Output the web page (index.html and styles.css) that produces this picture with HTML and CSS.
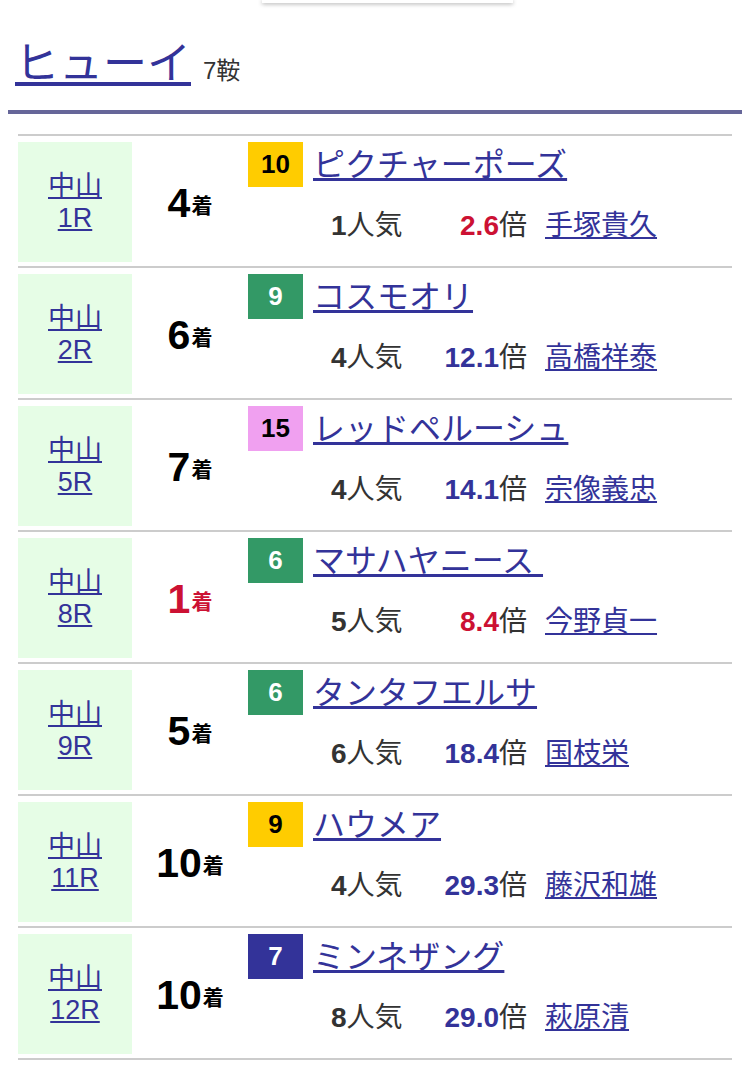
FILE: index.html
```html
<!DOCTYPE html>
<html lang="ja">
<head>
    <meta charset="UTF-8">
    <meta name="viewport" content="width=device-width, initial-scale=1.0">
    <title>ヒューイ - 騎乗成績</title>
    <link rel="stylesheet" href="styles.css">
</head>
<body>
    <div class="menu-edge"></div>

    <div class="header">
        <a href="#" class="horse-title">ヒューイ</a>
        <span class="count">7鞍</span>
    </div>

    <div class="list">
        <div class="row">
            <div class="race"><a href="#">中山<br>1R</a></div>
            <div class="rank">4<small>着</small></div>
            <div class="detail">
                <div class="name-line">
                    <span class="waku waku-yellow">10</span>
                    <a href="#" class="horse">ピクチャーポーズ</a>
                </div>
                <div class="info-line">
                    <span class="pop"><b>1</b>人気</span>
                    <span class="odds"><b class="hot">2.6</b>倍</span>
                    <a href="#" class="jockey">手塚貴久</a>
                </div>
            </div>
        </div>

        <div class="row">
            <div class="race"><a href="#">中山<br>2R</a></div>
            <div class="rank">6<small>着</small></div>
            <div class="detail">
                <div class="name-line">
                    <span class="waku waku-green">9</span>
                    <a href="#" class="horse">コスモオリ</a>
                </div>
                <div class="info-line">
                    <span class="pop"><b>4</b>人気</span>
                    <span class="odds"><b>12.1</b>倍</span>
                    <a href="#" class="jockey">高橋祥泰</a>
                </div>
            </div>
        </div>

        <div class="row">
            <div class="race"><a href="#">中山<br>5R</a></div>
            <div class="rank">7<small>着</small></div>
            <div class="detail">
                <div class="name-line">
                    <span class="waku waku-pink">15</span>
                    <a href="#" class="horse">レッドペルーシュ</a>
                </div>
                <div class="info-line">
                    <span class="pop"><b>4</b>人気</span>
                    <span class="odds"><b>14.1</b>倍</span>
                    <a href="#" class="jockey">宗像義忠</a>
                </div>
            </div>
        </div>

        <div class="row">
            <div class="race"><a href="#">中山<br>8R</a></div>
            <div class="rank win">1<small>着</small></div>
            <div class="detail">
                <div class="name-line">
                    <span class="waku waku-green">6</span>
                    <a href="#" class="horse">マサハヤニース&nbsp;</a>
                </div>
                <div class="info-line">
                    <span class="pop"><b>5</b>人気</span>
                    <span class="odds"><b class="hot">8.4</b>倍</span>
                    <a href="#" class="jockey">今野貞一</a>
                </div>
            </div>
        </div>

        <div class="row">
            <div class="race"><a href="#">中山<br>9R</a></div>
            <div class="rank">5<small>着</small></div>
            <div class="detail">
                <div class="name-line">
                    <span class="waku waku-green">6</span>
                    <a href="#" class="horse">タンタフエルサ</a>
                </div>
                <div class="info-line">
                    <span class="pop"><b>6</b>人気</span>
                    <span class="odds"><b>18.4</b>倍</span>
                    <a href="#" class="jockey">国枝栄</a>
                </div>
            </div>
        </div>

        <div class="row">
            <div class="race"><a href="#">中山<br>11R</a></div>
            <div class="rank">10<small>着</small></div>
            <div class="detail">
                <div class="name-line">
                    <span class="waku waku-yellow">9</span>
                    <a href="#" class="horse">ハウメア</a>
                </div>
                <div class="info-line">
                    <span class="pop"><b>4</b>人気</span>
                    <span class="odds"><b>29.3</b>倍</span>
                    <a href="#" class="jockey">藤沢和雄</a>
                </div>
            </div>
        </div>

        <div class="row">
            <div class="race"><a href="#">中山<br>12R</a></div>
            <div class="rank">10<small>着</small></div>
            <div class="detail">
                <div class="name-line">
                    <span class="waku waku-navy">7</span>
                    <a href="#" class="horse">ミンネザング</a>
                </div>
                <div class="info-line">
                    <span class="pop"><b>8</b>人気</span>
                    <span class="odds"><b>29.0</b>倍</span>
                    <a href="#" class="jockey">萩原清</a>
                </div>
            </div>
        </div>
    </div>
</body>
</html>
```

FILE: styles.css
```css
body {
    font-family: "Liberation Sans", "Noto Sans CJK JP", sans-serif;
    background-color: #fff;
    color: #333;
    margin: 0 8px;
}
a {
    color: #333399;
}
.menu-edge {
    margin-left: 254px;
    width: 251px;
    height: 3px;
    background-color: #fff;
    box-shadow: 0 1px 4px rgba(0,0,0,0.35);
}
.header {
    display: flex;
    align-items: baseline;
    padding: 36px 0 0 7px;
    height: 71px;
    border-bottom: 4px solid #666699;
}
.horse-title {
    font-size: 44px;
    line-height: 50px;
}
.count {
    font-size: 24px;
    margin-left: 12px;
}
.list {
    margin: 20px 10px 0;
    border-bottom: 2px solid #ccc;
}
.row {
    display: flex;
    border-top: 2px solid #ccc;
    padding: 6px 0 4px;
}
.race {
    width: 114px;
    height: 120px;
    background-color: #e6fde6;
    display: flex;
    align-items: center;
    justify-content: center;
    text-align: center;
    font-size: 27px;
    line-height: 32px;
}
.rank {
    width: 116px;
    display: flex;
    align-items: center;
    justify-content: center;
    font-size: 41px;
    font-weight: bold;
    color: #000;
    padding-top: 2px;
}
.rank small {
    font-size: 21px;
    margin-left: 1px;
    align-self: flex-end;
    margin-bottom: 43px;
}
.rank.win {
    color: #cc1133;
}
.detail {
    flex: 1;
}
.name-line {
    display: flex;
    align-items: center;
    height: 45px;
}
.waku {
    width: 55px;
    height: 45px;
    display: flex;
    align-items: center;
    justify-content: center;
    font-size: 26px;
    font-weight: bold;
    color: #000;
}
.waku-yellow {
    background-color: #ffcc00;
}
.waku-green {
    background-color: #339966;
    color: #fff;
}
.waku-pink {
    background-color: #f0a0f0;
}
.waku-navy {
    background-color: #333399;
    color: #fff;
}
.horse {
    margin-left: 10px;
    font-size: 32px;
    line-height: 40px;
}
.info-line {
    display: flex;
    align-items: baseline;
    margin-top: 21px;
    padding-left: 83px;
    font-size: 28px;
    line-height: 36px;
}
.pop {
    width: 96px;
}
.odds {
    width: 100px;
    text-align: right;
}
.odds b {
    color: #333399;
}
.odds b.hot {
    color: #cc1133;
}
.jockey {
    margin-left: 18px;
}
```
